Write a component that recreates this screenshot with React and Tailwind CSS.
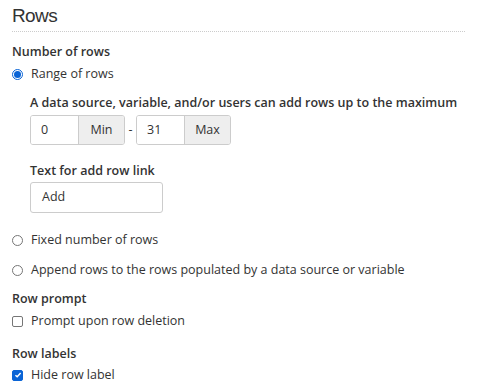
import React from 'react';

const font = { fontFamily: '"Open Sans", "Noto Sans", sans-serif' };

const Radio = ({ checked }) => (
  <span
    className={`inline-flex items-center justify-center w-[11px] h-[11px] rounded-full border shrink-0 ${
      checked ? 'border-[#0a64d6] bg-white' : 'border-[#767676] bg-white'
    }`}
  >
    {checked && <span className="w-[7px] h-[7px] rounded-full bg-[#0a64d6]" />}
  </span>
);

const Checkbox = ({ checked }) => (
  <span
    className={`inline-flex items-center justify-center w-[11px] h-[11px] rounded-[2px] border shrink-0 ${
      checked ? 'border-[#0a64d6] bg-[#0a64d6]' : 'border-[#767676] bg-white'
    }`}
  >
    {checked && (
      <svg viewBox="0 0 10 10" className="w-[8px] h-[8px]">
        <path d="M1.8 5.2 L4 7.3 L8.3 2.6" fill="none" stroke="white" strokeWidth="1.8" />
      </svg>
    )}
  </span>
);

const Option = ({ type, checked, children, className = '' }) => (
  <label className={`flex items-center gap-[8px] pl-[12px] h-[20px] ${className}`}>
    {type === 'radio' ? <Radio checked={checked} /> : <Checkbox checked={checked} />}
    <span>{children}</span>
  </label>
);

export default function App() {
  return (
    <div className="w-[477px] h-[391px] bg-white text-[#333] text-[12.5px] overflow-hidden" style={font}>
      <div className="px-[12px] pt-[3px]">
        <h2
          className="text-[19px] leading-[25px] tracking-[-0.6px] text-[#333] pb-[3px] border-b border-dotted border-[#ccc]"
          style={{ fontFamily: '"Liberation Sans", Arial, sans-serif' }}
        >
          Rows
        </h2>
      </div>

      <div className="pt-[10px]">
        <div className="px-[12px] font-semibold h-[20px] flex items-center">Number of rows</div>
        <Option type="radio" checked className="mt-[2px]">Range of rows</Option>

        <div className="pl-[30px] pt-[9px]">
          <div className="font-semibold h-[20px] flex items-center">
            A data source, variable, and/or users can add rows up to the maximum
          </div>
          <div className="flex items-center mt-[2px]">
            <div className="flex h-[30px] rounded-[3px] border border-[#ccc] overflow-hidden">
              <div className="w-[47px] bg-white pl-[10px] flex items-center">0</div>
              <div className="w-[46px] bg-[#eee] border-l border-[#ccc] flex items-center justify-center">Min</div>
            </div>
            <span className="w-[11px] text-center">-</span>
            <div className="flex h-[30px] rounded-[3px] border border-[#ccc] overflow-hidden">
              <div className="w-[47px] bg-white pl-[10px] flex items-center">31</div>
              <div className="w-[46px] bg-[#eee] border-l border-[#ccc] flex items-center justify-center">Max</div>
            </div>
          </div>

          <div className="font-semibold h-[20px] flex items-center mt-[16px]">Text for add row link</div>
          <div className="mt-[1px] w-[133px] h-[31px] rounded-[3px] border border-[#ccc] bg-white pl-[11px] flex items-center">
            Add
          </div>
        </div>

        <Option type="radio" className="mt-[17px]">Fixed number of rows</Option>
        <Option type="radio" className="mt-[10px]">
          Append rows to the rows populated by a data source or variable
        </Option>

        <div className="px-[12px] font-semibold h-[20px] flex items-center mt-[9px]">Row prompt</div>
        <Option type="checkbox" className="mt-[2px]">Prompt upon row deletion</Option>

        <div className="px-[12px] font-semibold h-[20px] flex items-center mt-[13px]">Row labels</div>
        <Option type="checkbox" checked className="mt-[1px]">Hide row label</Option>
      </div>
    </div>
  );
}
